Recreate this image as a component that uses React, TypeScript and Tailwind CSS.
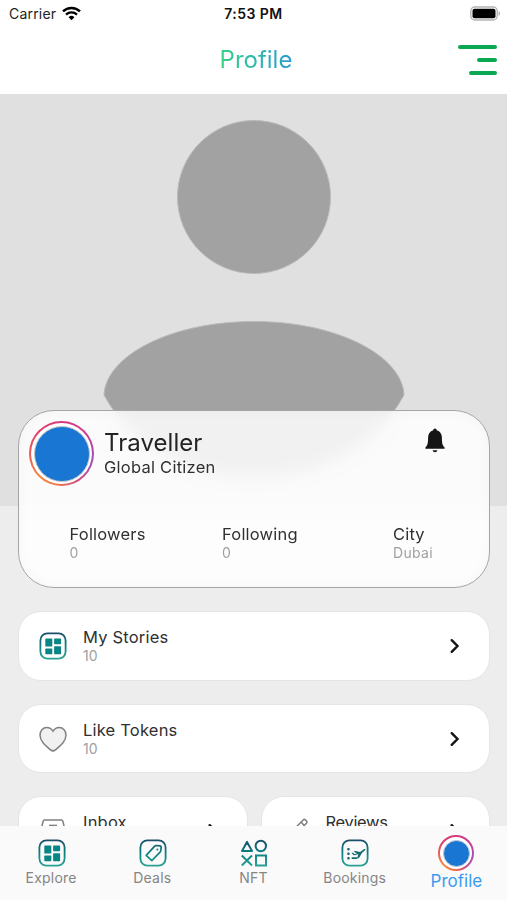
import type { ReactNode } from 'react'

const TEAL = 'url(#teal)'

function Defs() {
  return (
    <svg className="absolute h-0 w-0" aria-hidden="true">
      <defs>
        <linearGradient id="teal" gradientUnits="userSpaceOnUse" x1="0" y1="0" x2="0" y2="28">
          <stop offset="0" stopColor="#1d4a68" />
          <stop offset="0.45" stopColor="#0b7c80" />
          <stop offset="1" stopColor="#2ba596" />
        </linearGradient>
      </defs>
    </svg>
  )
}

function Wifi() {
  return (
    <svg className="h-[15px] w-[19px]" viewBox="0 0 19 15" fill="none" stroke="#000" strokeWidth="2.5">
      <path d="M1 5.4a12.2 12.2 0 0 1 17 0" />
      <path d="M4 8.6a8 8 0 0 1 11 0" strokeWidth="2.2" />
      <path d="M6.6 11.2a4.2 4.2 0 0 1 5.8 0L9.5 14.3z" fill="#000" stroke="none" />
    </svg>
  )
}

function Battery() {
  return (
    <svg className="h-[15px] w-[31px]" viewBox="0 0 31 15">
      <rect x="0.8" y="1" width="26.4" height="13" rx="4" fill="#fff" stroke="#b3b3b3" strokeWidth="1.4" />
      <rect x="2.5" y="2.7" width="23" height="9.6" rx="2" fill="#000" />
      <path d="M28.6 5.2c1.8.5 1.8 4 0 4.5z" fill="#a5a5a5" />
    </svg>
  )
}

function Frame({ children }: { children: ReactNode }) {
  return (
    <svg className="h-7 w-7 shrink-0" viewBox="0 0 28 28" fill="none" stroke={TEAL} strokeWidth="1.8">
      <rect x="1.4" y="1.4" width="25.2" height="25.2" rx="7" />
      {children}
    </svg>
  )
}

function GridIcon() {
  return (
    <Frame>
      <g fill="#0a8585" stroke="none">
        <rect x="6.3" y="6.4" width="7" height="8.2" rx="0.7" />
        <rect x="15.1" y="6.4" width="7" height="5.9" rx="0.7" />
        <rect x="6.3" y="16.6" width="7" height="5.7" rx="0.7" />
        <rect x="15.1" y="14.3" width="7" height="8" rx="0.7" />
      </g>
    </Frame>
  )
}

function DealsIcon() {
  return (
    <Frame>
      <path
        d="M7.200 16.300 15.700 7.200c.5-.5 1-.7 1.600-.7l3.800.4c.7.1 1.100.5 1.100 1.200l-.4 3.600c-.1.6-.3 1-.7 1.400l-8.300 8.600z"
        strokeLinejoin="round"
        strokeWidth="1.7"
      />
      <circle cx="18.400" cy="10.400" r="1" fill="#0b7c80" stroke="none" />
    </Frame>
  )
}

function NftIcon() {
  return (
    <svg className="h-7 w-7" viewBox="0 0 28 28" fill="none" stroke={TEAL} strokeWidth="2">
      <path d="M7 2.900 12 12H2z" strokeLinejoin="round" />
      <circle cx="20.800" cy="7" r="5.200" />
      <path d="m1.800 16.500 10.200 10M12 16.500l-10.200 10" />
      <rect x="16" y="16.500" width="10" height="10" />
    </svg>
  )
}

function BookingsIcon() {
  return (
    <Frame>
      <g fill="#14696f" stroke="none">
        <rect x="6.200" y="8.900" width="2.500" height="2.500" rx="0.900" />
        <rect x="6.200" y="13.400" width="2.500" height="2.500" rx="0.900" />
        <rect x="6.200" y="17.900" width="2.500" height="2.500" rx="0.900" />
        <rect x="10.500" y="18.200" width="5.800" height="1.900" rx="0.800" />
        <path d="M10.500 13.800h1.600l1.500 1.500 2.300-.7-3.400-2.200 1.800-.5 4.800 1.100 3.400-2.600c1-.7 2.400-.6 1.800.3-.4.800-2 2-3.200 3l-3.100 5.200-1.900.6 1.200-4.400-3.400 1.200c-.8.2-1.600-.1-2.100-.7z" />
      </g>
    </Frame>
  )
}

function HeartIcon() {
  return (
    <svg className="h-7 w-7 shrink-0" viewBox="0 0 28 28" fill="#f1f1f1" stroke="#808080" strokeWidth="1.500">
      <path d="M14 6.200C12.300 3.700 10.300 2.600 7.800 2.600 3.900 2.600 1 5.600 1 10c0 6.500 5.600 10.700 10.600 14.900 1.800 1.500 3 1.500 4.800 0C21.400 20.700 27 16.500 27 10c0-4.400-2.900-7.400-6.800-7.400-2.500 0-4.500 1.100-6.200 3.600z" />
    </svg>
  )
}

function InboxIcon() {
  return (
    <svg className="h-7 w-7 shrink-0" viewBox="0 0 28 28" fill="none" stroke="#808080" strokeWidth="1.500">
      <path d="M2 13 4.200 4q.3-1 1.300-1h17q1 0 1.300 1L26 13v10q0 2-2 2H4q-2 0-2-2z" />
      <path d="M10 8.400h8" />
    </svg>
  )
}

function PencilIcon() {
  return (
    <svg className="h-7 w-7 shrink-0" viewBox="0 0 28 28" fill="none" stroke="#808080" strokeWidth="1.500">
      <path d="M4 20.500 21.200 2.900q1.100-1.100 2.200 0l1.100 1.100q1.100 1.100 0 2.200L7.500 23.500 3 25z" />
      <path d="m19 5.100 3.200 3.300" />
    </svg>
  )
}

function Chevron() {
  return (
    <svg className="h-4 w-[10px]" viewBox="0 0 10 16" fill="none" stroke="#151515" strokeWidth="2.400">
      <path d="m1.700 2.200 5.800 5.800-5.800 5.800" strokeLinecap="round" strokeLinejoin="miter" />
    </svg>
  )
}

function Bell() {
  return (
    <svg className="h-[25px] w-[22px]" viewBox="0 0 22 25" fill="#151515">
      <path d="M11 0.500c1 0 1.700.7 1.700 1.800 3.500.9 5.200 3.700 5.200 7.300 0 5.400.5 8.200 2.700 9.800v1.400H1.400v-1.400c2.200-1.600 2.700-4.400 2.700-9.800 0-3.600 1.700-6.400 5.200-7.300 0-1.100.7-1.800 1.700-1.800z" />
      <path d="M8.600 22.300h4.800c-.3 1.200-1.200 2-2.400 2s-2.100-.8-2.400-2z" />
    </svg>
  )
}

function Avatar({ small = false }: { small?: boolean }) {
  return (
    <div
      className={
        'shrink-0 rounded-full bg-[conic-gradient(#d83a80,#c9408c_15%,#a24fba_28%,#d0527c_42%,#f4704a_52%,#f58a42_62%,#e95a52_75%,#dd3f6d_88%,#d83a80)] ' +
        (small ? 'h-9 w-9 p-[2px]' : 'h-[65px] w-[65px] p-[2px]')
      }
    >
      <div className={'h-full w-full rounded-full bg-white ' + (small ? 'p-[2.500px]' : 'p-[2.500px]')}>
        <div className={'h-full w-full rounded-full bg-[#1976d2] ' + (small ? 'border border-[#b9cadb]' : 'border-[1.500px] border-[#c5c9cc]')} />
      </div>
    </div>
  )
}

function Silhouette() {
  return (
    <svg className="h-[412px] w-full" viewBox="0 0 507 412" fill="#a2a2a2" stroke="#b9b9b9" strokeWidth="1">
      <circle cx="254" cy="103" r="76.500" />
      <path d="M104 301C106 261 172 227.500 254 227.500S402 261 404 301C376 353 319 383 254 383S132 353 104 301z" />
    </svg>
  )
}

function Stat({ label, value, className }: { label: string; value: string; className: string }) {
  return (
    <div className={className}>
      <div className="text-[16.500px] leading-5 tracking-[0.200px] text-[#303030]">{label}</div>
      <div className="text-[14px] leading-[18px] tracking-[0.300px] text-[#a0a0a0]">{value}</div>
    </div>
  )
}

function Row({ icon, title, count, tight = false }: { icon: ReactNode; title: string; count?: string; tight?: boolean }) {
  return (
    <div className="flex h-[69.500px] flex-1 items-start rounded-[23px] border border-[#e5e5e5] bg-white pl-[20px] pr-[29px]">
      <div className="mt-[20px]">{icon}</div>
      <div className="ml-4 mt-[15px] flex-1">
        <div className={'text-[16.500px] leading-5 text-[#303030] ' + (tight ? '-tracking-[0.350px]' : 'tracking-[0.200px]')}>{title}</div>
        <div className="text-[14px] leading-[18px] text-[#a0a0a0]">{count}</div>
      </div>
      <div className="mt-[26px]">
        <Chevron />
      </div>
    </div>
  )
}

function Tab({ icon, label }: { icon: ReactNode; label: string }) {
  return (
    <div className="flex flex-1 flex-col items-center pt-[13px]">
      {icon}
      <span className="mr-px mt-[2px] text-[14px] leading-[18px] tracking-[0.200px] text-[#858585]">{label}</span>
    </div>
  )
}

export default function App() {
  return (
    <div className="flex h-[900px] w-full flex-col overflow-hidden bg-[#ededed] font-['Inter','Liberation_Sans',sans-serif]">
      <Defs />
      <header className="flex h-[94px] shrink-0 flex-col bg-white">
        <div className="grid h-7 grid-cols-[1fr_auto_1fr] items-center px-[6px] pb-px">
          <div className="flex items-center gap-[6px] pl-[3px] text-[14px] tracking-[0.200px] text-[#222]">
            Carrier <Wifi />
          </div>
          <div className="text-center text-[14px] font-semibold tracking-[0.450px] text-[#111]">7:53 PM</div>
          <div className="flex justify-end">
            <Battery />
          </div>
        </div>
        <div className="grid h-16 grid-cols-[1fr_auto_1fr] items-center px-[10px]">
          <span />
          <h1 className="ml-[5px] bg-gradient-to-r from-[#3ad184] to-[#2b9bd0] bg-clip-text text-[24px] leading-8 text-transparent">
            Profile
          </h1>
          <div className="-mt-px flex flex-col items-end gap-[9px]">
            <span className="h-1 w-[39px] rounded-full bg-[#0aa853]" />
            <span className="h-1 w-[20px] rounded-full bg-[#0aa853]" />
            <span className="h-1 w-7 rounded-full bg-[#0aa853]" />
          </div>
        </div>
      </header>

      <main className="min-h-0 flex-1 overflow-hidden">
        <div className="h-[412px] bg-[#e0e0e0]">
          <Silhouette />
        </div>
        <section className="relative -mt-[96px] ml-[18px] mr-[17px] h-[178px] rounded-[36px] border border-[#a5a5a5] bg-white/85 shadow-[inset_0_0_14px_rgba(0,0,0,0.030)] backdrop-blur-[8px]">
          <div className="flex pl-[10px] pr-[43px] pt-[10px]">
            <Avatar />
            <div className="ml-[10px] mt-[7px] flex-1">
              <div className="text-[24px] leading-[30px] tracking-[0.050px] text-[#242424]">Traveller</div>
              <div className="-mt-px text-[16.500px] leading-5 tracking-[0.250px] text-[#303030]">Global Citizen</div>
            </div>
            <div className="mt-[7px]">
              <Bell />
            </div>
          </div>
          <div className="mt-[38px] flex pl-[50.500px]">
            <Stat label="Followers" value="0" className="w-[152.500px]" />
            <Stat label="Following" value="0" className="w-[171px]" />
            <Stat label="City" value="Dubai" className="w-[60px]" />
          </div>
        </section>
        <div className="ml-[18px] mr-[17px] mt-[23px] flex flex-col gap-[23.200px]">
          <div className="flex">
            <Row icon={<GridIcon />} title="My Stories" count="10" />
          </div>
          <div className="flex">
            <Row icon={<HeartIcon />} title="Like Tokens" count="10" />
          </div>
          <div className="flex gap-[13px]">
            <Row icon={<InboxIcon />} title="Inbox" />
            <Row icon={<PencilIcon />} title="Reviews" tight />
          </div>
        </div>
      </main>

      <nav className="flex h-[74px] shrink-0 bg-[#fafafa] pl-px">
        <Tab icon={<GridIcon />} label="Explore" />
        <Tab icon={<DealsIcon />} label="Deals" />
        <Tab icon={<NftIcon />} label="NFT" />
        <Tab icon={<BookingsIcon />} label="Bookings" />
        <div className="flex flex-1 flex-col items-center pt-[9px]">
          <Avatar small />
          <span className="text-[17px] leading-5 text-[#3a9bee]">Profile</span>
        </div>
      </nav>
    </div>
  )
}
